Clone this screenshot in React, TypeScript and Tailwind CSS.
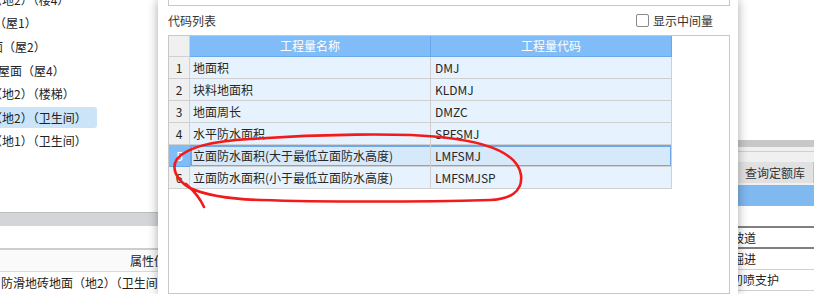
import React from "react";

const treeRows = [
  { text: "（地2）（楼4）", shift: "-ml-[10px]" },
  { text: "（屋1）", shift: "-ml-[6px]" },
  { text: "面（屋2）", shift: "-ml-[9px]" },
  { text: "屋面（屋4）", shift: "-ml-[2px]" },
  { text: "（地2）（楼梯）", shift: "-ml-[10px]" },
  { text: "（地2）（卫生间）", shift: "-ml-[10px]", active: true },
  { text: "（地1）（卫生间）", shift: "-ml-[10px]" },
];

const codes = [
  { name: "地面积", code: "DMJ" },
  { name: "块料地面积", code: "KLDMJ" },
  { name: "地面周长", code: "DMZC" },
  { name: "水平防水面积", code: "SPFSMJ" },
  { name: "立面防水面积(大于最低立面防水高度)", code: "LMFSMJ", selected: true },
  { name: "立面防水面积(小于最低立面防水高度)", code: "LMFSMJSP" },
];

function LeftPanel() {
  return (
    <div className="w-[158px] shrink-0 h-full flex flex-col overflow-hidden bg-white text-[12px] text-[#222]">
      <div className="-mt-[12px] shrink-0">
        {treeRows.map((r, i) => (
          <div key={i} className="h-[23.6px] flex items-center">
            <div
              className={
                r.active
                  ? "h-[21px] w-[97px] flex items-center overflow-hidden bg-[#cce4f7] rounded-r-[3px]"
                  : "h-[21px] flex items-center overflow-hidden"
              }
            >
              <span className={`whitespace-nowrap ${r.shift}`}>{r.text}</span>
            </div>
          </div>
        ))}
      </div>
      <div className="flex-1" />
      <div className="shrink-0 border-t border-[#bcbcbc] h-[14px] bg-[#d4d5d9]" />
      <div className="shrink-0 h-[22px] bg-white" />
      <div className="shrink-0 h-[2px] bg-[#cdcdcd]" />
      <div className="shrink-0 h-[22px] bg-[#fafafa] flex items-center pl-[130px] whitespace-nowrap border-b border-[#d8d8d8]">
        属性值
      </div>
      <div className="shrink-0 h-[22px] flex items-center pl-[1px] whitespace-nowrap">
        防滑地砖地面（地2）（卫生间）
      </div>
    </div>
  );
}

function CodeTable() {
  return (
    <div className="flex-1 border border-[#c8c8c8] bg-white">
      <div className="flex h-[21px]">
        <div className="w-[21px] bg-[#f0f0f0] border-r border-b border-[#d0d0d0]" />
        <div className="w-[241px] bg-[#80bcf7] border-r border-b border-[#6aa8ec] text-white flex items-center justify-center">
          工程量名称
        </div>
        <div className="w-[241px] bg-[#80bcf7] border-r border-b border-[#6aa8ec] text-white flex items-center justify-center">
          工程量代码
        </div>
      </div>
      {codes.map((c, i) => (
        <div key={i} className="flex h-[22px]">
          <div
            className={
              c.selected
                ? "w-[21px] bg-[#80bcf7] border-b border-[#6aa8ec] text-white flex items-center justify-center"
                : "w-[21px] bg-[#f0f0f0] border-r border-b border-[#d0d0d0] flex items-center justify-center"
            }
          >
            {i + 1}
          </div>
          <div
            className={
              c.selected
                ? "flex bg-[#d6e9fb] shadow-[inset_0_0_0_2px_#6ea8e8]"
                : "flex bg-[#e6f3fe]"
            }
          >
            <div className="w-[241px] border-r border-b border-[#d0d0d0] flex items-center pl-[3px] whitespace-nowrap">
              {c.name}
            </div>
            <div className="w-[241px] border-r border-b border-[#d0d0d0] flex items-center pl-[4px]">
              {c.code}
            </div>
          </div>
        </div>
      ))}
    </div>
  );
}

function Dialog() {
  return (
    <div className="relative z-10 w-[580px] shrink-0 h-full bg-white flex flex-col pl-[10px] pr-[8px] shadow-[0_0_10px_rgba(0,0,0,0.35)] text-[12px] text-[#262626]">
      <div className="shrink-0 h-[6px] border-x border-b border-[#c8c8c8]" />
      <div className="shrink-0 h-[29px] flex items-center justify-between">
        <span className="text-[#333]">代码列表</span>
        <label className="flex items-center gap-[4px] mr-[17px] text-[#333]">
          <span className="w-[13px] h-[13px] border border-[#8a8a8a] rounded-[2px] bg-white" />
          显示中间量
        </label>
      </div>
      <CodeTable />
    </div>
  );
}

function RightPanel() {
  const row = "shrink-0 h-[20px] flex items-center overflow-hidden whitespace-nowrap";
  return (
    <div className="flex-1 h-full flex flex-col overflow-hidden bg-white text-[12px] text-[#222]">
      <div className="shrink-0 h-[140px] bg-white" />
      <div className="shrink-0 h-[7px] bg-[#c8c8c8]" />
      <div className="shrink-0 h-[4px] bg-[#f0f0f0]" />
      <div className="shrink-0 h-[1px] bg-[#d0d0d0]" />
      <div className="shrink-0 h-[10px] bg-[#f0f0f0]" />
      <div className="shrink-0 h-[21px] bg-[#e1e1e1] flex items-center pl-[7px] whitespace-nowrap text-[#333] border-r border-[#c0c0c0]">
        查询定额库
      </div>
      <div className="shrink-0 h-[2px] bg-[#f0f0f0]" />
      <div className="shrink-0 h-[21px] bg-[#80b8f0]" />
      <div className="shrink-0 h-[20px] bg-white" />
      <div className="shrink-0 h-[2px] bg-[#808080]" />
      <div className="shrink-0 h-[19px] flex items-center overflow-hidden whitespace-nowrap">
        <span className="-ml-[6px]">坡道</span>
      </div>
      <div className="shrink-0 h-[2px] bg-[#808080]" />
      <div className={row}>
        <span className="-ml-[6px]">掘进</span>
      </div>
      <div className="shrink-0 h-[1px] bg-[#d0d0d0]" />
      <div className={row}>
        <span className="-ml-[7px]">初喷支护</span>
      </div>
      <div className="shrink-0 h-[1px] bg-[#d0d0d0]" />
      <div className={row}>
        <span className="-ml-[6px]">挂钢筋网</span>
      </div>
    </div>
  );
}

export default function App() {
  return (
    <div className="relative w-[814px] h-[294px] overflow-hidden flex bg-white font-['Noto_Sans_CJK_SC','Noto_Sans',sans-serif]">
      <LeftPanel />
      <Dialog />
      <RightPanel />
      <svg className="absolute inset-0 z-20 pointer-events-none" width="814" height="294" viewBox="0 0 814 294">
        <path
          d="M 250 139 C 320 134, 400 133, 440 137 C 490 142, 518 155, 521 175 C 523 192, 510 199, 490 200 C 420 202, 320 202, 260 200 C 228 199, 205 195, 190 188 C 176 180, 171 168, 177 159 C 186 148, 212 141, 250 139 M 186 184 C 194 191, 200 198, 204 207"
          fill="none"
          stroke="#f21a1a"
          strokeWidth="2.6"
          strokeLinecap="round"
          strokeLinejoin="round"
        />
      </svg>
    </div>
  );
}
